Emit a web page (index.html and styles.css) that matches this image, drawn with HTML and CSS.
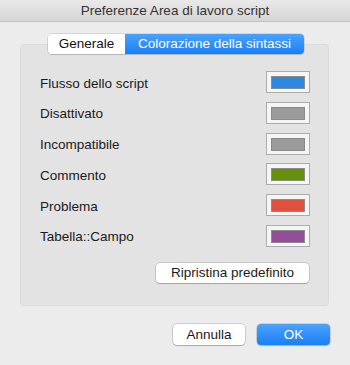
FILE: index.html
```html
<!DOCTYPE html>
<html>
<head>
<meta charset="utf-8">
<link rel="stylesheet" href="styles.css">
</head>
<body>
<div class="window">
  <div class="titlebar">Preferenze Area di lavoro script</div>
  <div class="main">
    <div class="tabs">
      <div class="tab">Generale</div>
      <div class="tab active">Colorazione della sintassi</div>
    </div>
    <div class="box">
      <div class="rows">
        <div class="row"><span class="label">Flusso dello script</span><span class="well"><span class="chip c-blue"></span></span></div>
        <div class="row"><span class="label">Disattivato</span><span class="well"><span class="chip c-gray"></span></span></div>
        <div class="row"><span class="label">Incompatibile</span><span class="well"><span class="chip c-gray"></span></span></div>
        <div class="row"><span class="label">Commento</span><span class="well"><span class="chip c-green"></span></span></div>
        <div class="row"><span class="label">Problema</span><span class="well"><span class="chip c-red"></span></span></div>
        <div class="row"><span class="label">Tabella::Campo</span><span class="well"><span class="chip c-purple"></span></span></div>
      </div>
      <div class="reset-row"><button class="btn reset">Ripristina predefinito</button></div>
    </div>
    <div class="footer">
      <button class="btn cancel">Annulla</button>
      <button class="btn ok">OK</button>
    </div>
  </div>
</div>
</body>
</html>
```
FILE: styles.css
```css
html, body {
  margin: 0;
  padding: 0;
}
body {
  width: 350px;
  height: 365px;
  overflow: hidden;
  background: #ececec;
  font-family: "Liberation Sans", Arial, sans-serif;
  font-size: 13.5px;
  color: #1a1a1a;
}
.window {
  width: 350px;
  height: 365px;
  display: flex;
  flex-direction: column;
}
.titlebar {
  height: 21px;
  line-height: 22px;
  text-align: center;
  background: linear-gradient(#e9e9e9, #d5d5d5);
  border-bottom: 1px solid #c2c2c2;
  color: #333;
  font-size: 13.5px;
}
.main {
  display: flex;
  flex-direction: column;
  padding-top: 12px;
}
.tabs {
  display: flex;
  margin-left: 48px;
  height: 20px;
  position: relative;
  z-index: 2;
  border-radius: 4px;
  box-shadow: 0 0 0 0.5px rgba(0,0,0,0.18), 0 1px 1px rgba(0,0,0,0.12);
  width: 256px;
}
.tab {
  height: 20px;
  line-height: 20px;
  text-align: center;
  font-size: 13.5px;
}
.tab:first-child {
  width: 77px;
  background: #fff;
  border-radius: 4px 0 0 4px;
  color: #111;
}
.tab.active {
  flex: 1;
  background: linear-gradient(#4ca2fc, #1a7ff6);
  border-radius: 0 4px 4px 0;
  color: #fff;
}
.box {
  margin: -10px 21px 0 20px;
  height: 262px;
  box-sizing: border-box;
  background: #e3e3e3;
  border: 1px solid #dadada;
  border-radius: 4px;
  padding: 26px 18px 0 19px;
  display: flex;
  flex-direction: column;
}
.rows {
  display: flex;
  flex-direction: column;
  gap: 8.8px;
}
.row {
  height: 22px;
  display: flex;
  align-items: center;
  justify-content: space-between;
}
.label {
  padding-top: 2px;
}
.well {
  width: 44px;
  height: 22px;
  box-sizing: border-box;
  border: 1px solid #acacac;
  background: #f5f5f5;
  padding: 4px 4px 0 4px;
}
.chip {
  display: block;
  width: 34px;
  height: 13px;
  box-sizing: border-box;
  border: 1px solid #8a8a8a;
}
.c-blue { background: #2e88e0; }
.c-gray { background: #9b9b9b; }
.c-green { background: #64900a; }
.c-red { background: #e2513f; }
.c-purple { background: #934d9b; }
.reset-row {
  display: flex;
  justify-content: flex-end;
  margin-top: 16px;
  padding-right: 1px;
}
.btn {
  font-family: "Liberation Sans", Arial, sans-serif;
  font-size: 13.5px;
  height: 21px;
  padding: 0;
  margin: 0;
  border-radius: 4px;
  border: none;
  background: #fff;
  color: #1a1a1a;
  box-shadow: 0 0 0 0.5px rgba(0,0,0,0.25), 0 1px 1px rgba(0,0,0,0.18);
}
.reset {
  width: 153px;
  height: 20px;
}
.footer {
  display: flex;
  justify-content: flex-end;
  gap: 12px;
  margin-top: 18px;
  padding-right: 20px;
}
.cancel {
  width: 72px;
}
.ok {
  width: 73px;
  background: linear-gradient(#4ca2fc, #1a7ff6);
  color: #fff;
  box-shadow: 0 0 0 0.5px rgba(0,60,160,0.3), 0 1px 1px rgba(0,0,0,0.15);
}
```
